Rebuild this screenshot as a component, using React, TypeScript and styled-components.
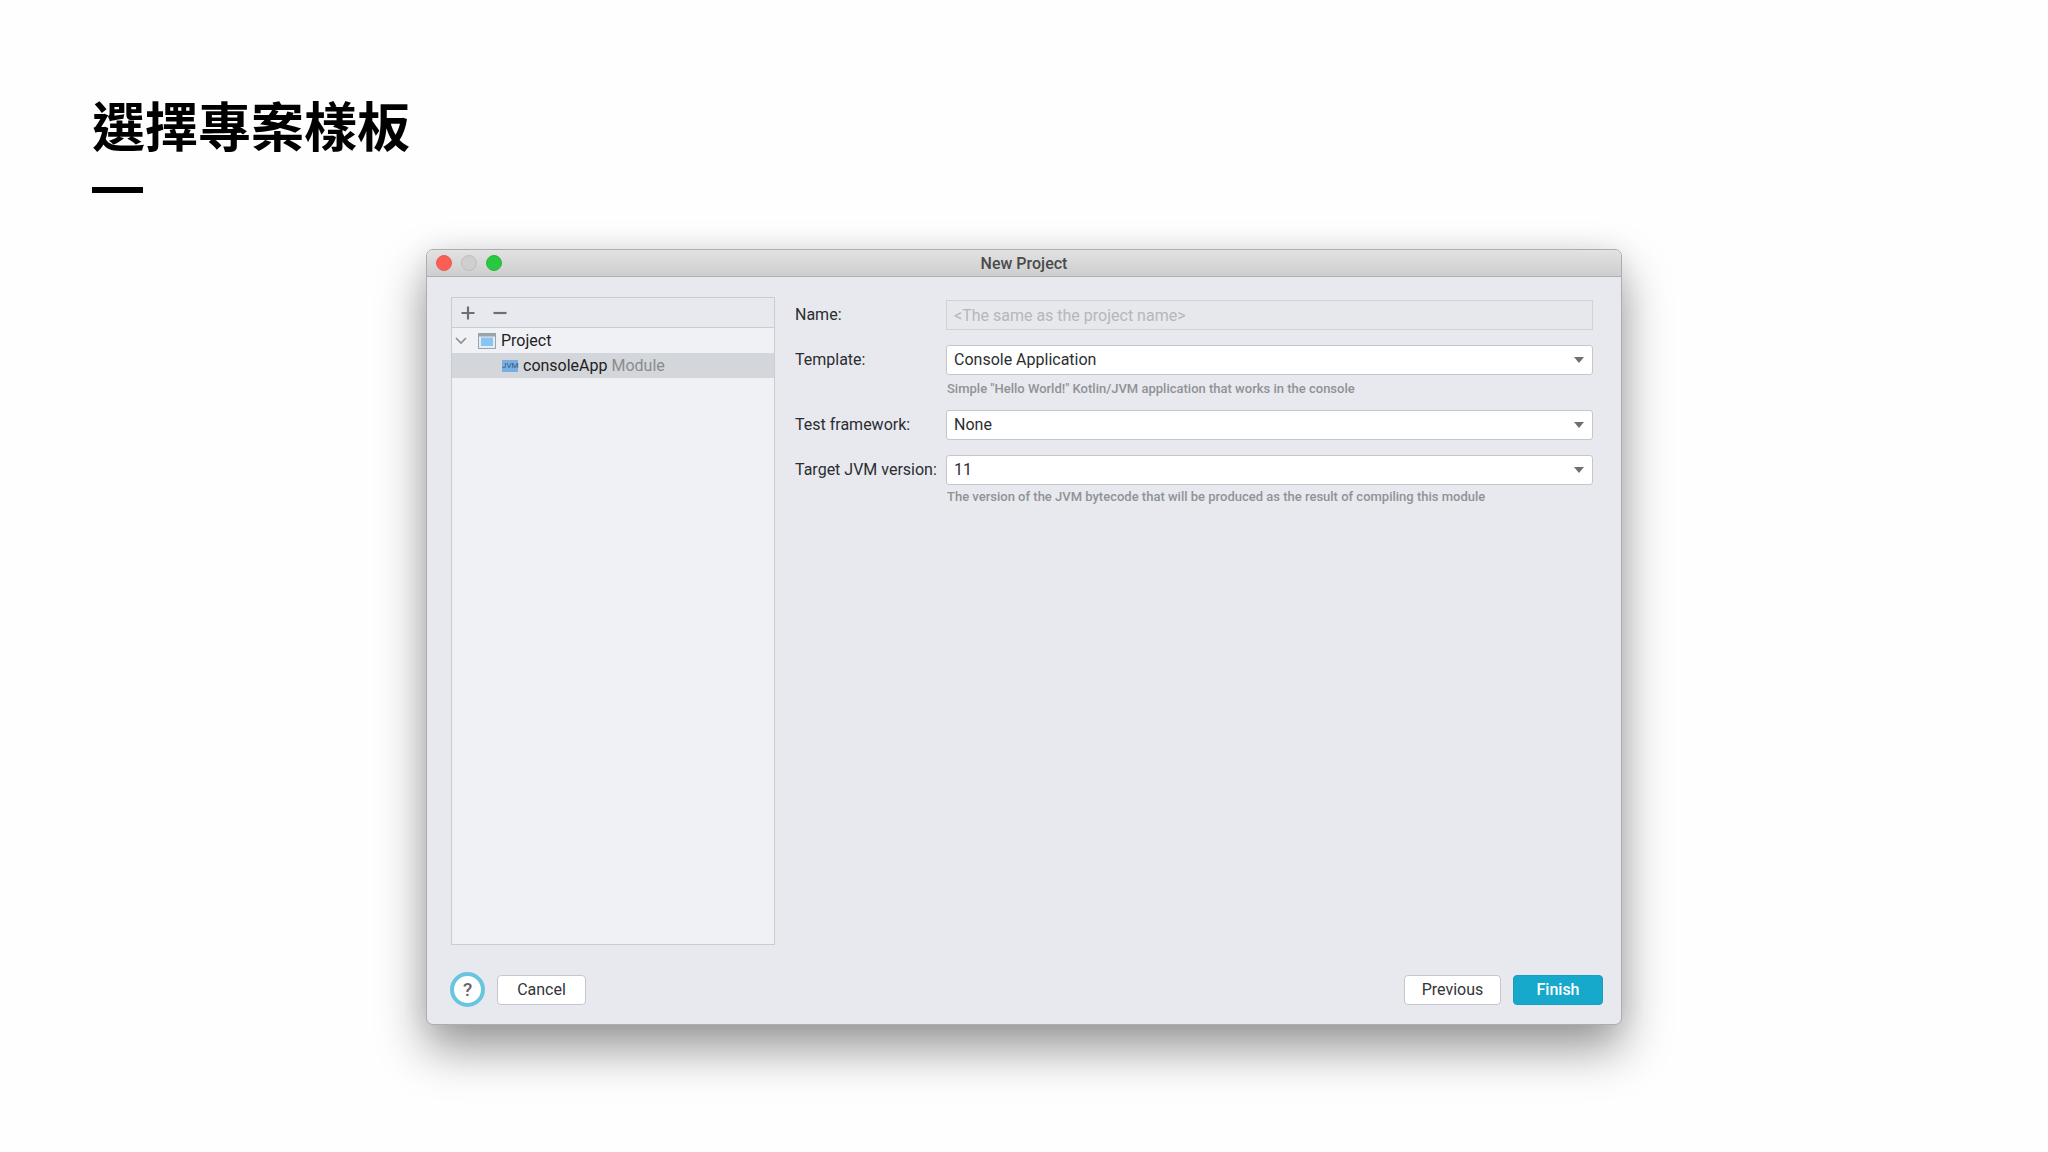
import React from "react";
import styled, { createGlobalStyle } from "styled-components";

const GlobalStyle = createGlobalStyle`
  *, *::before, *::after { box-sizing: border-box; }
  body {
    margin: 0;
    background: #fefefe;
    color: #2b2d30;
    font-family: Roboto, "Liberation Sans", sans-serif;
    font-size: 16px;
  }
`;

const Slide = styled.main`
  display: flex;
  flex-direction: column;
  min-height: 100vh;
  padding: 84px 92px 127px;
`;

const Heading = styled.h1`
  margin: 0;
  color: #000;
  font: 700 53px/80px "Noto Sans CJK TC", sans-serif;

  &::after {
    content: "";
    display: block;
    width: 51px;
    height: 6px;
    margin-top: 23px;
    background: #000;
  }
`;

const Dialog = styled.section`
  display: flex;
  flex: 1;
  flex-direction: column;
  width: 100%;
  max-width: 1196px;
  margin: 56px auto 0;
  border: 1px solid #acadaf;
  border-radius: 7px;
  background: #e7e9ee;
  box-shadow: 0 24px 48px rgba(0, 0, 0, 0.4), 0 0 28px rgba(0, 0, 0, 0.07);
`;

const TitleBar = styled.header`
  display: grid;
  grid-template-columns: 1fr auto 1fr;
  align-items: center;
  height: 27px;
  padding: 0 9px;
  border-bottom: 1px solid #b0b0b0;
  border-radius: 6px 6px 0 0;
  background: linear-gradient(#e2e2e2, #cecece);
`;

const Lights = styled.div`
  display: flex;
  gap: 9px;
`;

const Light = styled.button<{ $fill: string; $ring: string }>`
  width: 16px;
  height: 16px;
  padding: 0;
  border: 1px solid ${(p) => p.$ring};
  border-radius: 50%;
  background: ${(p) => p.$fill};
`;

const WindowTitle = styled.h2`
  margin: 0;
  padding-top: 2px;
  color: #4b4b4b;
  font-size: 16px;
  font-weight: 500;
  line-height: 20px;
`;

const Content = styled.div`
  display: grid;
  flex: 1;
  grid-template-columns: 324px 1fr;
  gap: 20px;
  padding: 20px 28px 0 24px;
`;

const Panel = styled.aside`
  border: 1px solid #c9ccd1;
  background: #eff1f5;
`;

const Toolbar = styled.div`
  display: flex;
  gap: 16px;
  align-items: center;
  height: 30px;
  padding: 0 8px;
  border-bottom: 1px solid #c9ccd1;
  background: #e7e9ee;
`;

const ToolButton = styled.button`
  display: grid;
  width: 16px;
  height: 16px;
  padding: 0;
  border: 0;
  background: none;
  place-items: center;
`;

const Tree = styled.ul`
  margin: 0;
  padding: 0;
  list-style: none;
`;

const TreeRow = styled.li<{ $depth: number; $selected?: boolean }>`
  display: flex;
  gap: 5px;
  align-items: center;
  height: 25px;
  padding-left: ${(p) => (p.$depth ? 50 : 3)}px;
  background: ${(p) => (p.$selected ? "#d3d6da" : "transparent")};
  color: #1f2124;

  small { color: #8a8c8f; font-size: inherit; }
  svg + svg { margin-left: 6px; }
`;

const JvmBadge = styled.span`
  width: 16px;
  height: 12px;
  background: #78aee2;
  color: #36587c;
  font-size: 8px;
  line-height: 12px;
  text-align: center;
`;

const Form = styled.form`
  display: grid;
  grid-template-columns: 151px 1fr;
  grid-auto-rows: min-content;
  padding-top: 3px;
`;

const Label = styled.label`
  line-height: 30px;
  white-space: nowrap;
`;

const TextField = styled.input`
  width: 100%;
  height: 30px;
  margin-bottom: 15px;
  padding: 0 7px;
  border: 1px solid #cfd2d7;
  background: #e6e8ec;
  font: inherit;

  &::placeholder { color: #b5b7bb; opacity: 1; }
`;

const SelectBox = styled.div`
  display: grid;
  align-items: center;

  > * { grid-area: 1 / 1; }
  svg { justify-self: end; margin-right: 9px; pointer-events: none; }
`;

const Select = styled.select`
  width: 100%;
  height: 30px;
  padding: 0 7px 1px;
  border: 1px solid #c4c6cc;
  border-radius: 3px;
  appearance: none;
  background: #fff;
  color: inherit;
  font: inherit;
`;

const Hint = styled.p<{ $top: number }>`
  grid-column: 2;
  height: ${(p) => 20 + p.$top}px;
  margin: 0;
  padding: ${(p) => p.$top}px 1px 0;
  color: #909297;
  font: 500 13px/20px Roboto, sans-serif;
`;

const Gap = styled.div<{ $size: number }>`
  grid-column: 1 / -1;
  height: ${(p) => p.$size}px;
`;

const Footer = styled.footer`
  display: flex;
  gap: 12px;
  align-items: center;
  height: 79px;
  padding: 10px 18px 0 23px;
`;

const Spacer = styled.span`
  flex: 1;
`;

const Button = styled.button<{ $primary?: boolean; $width: number }>`
  width: ${(p) => p.$width}px;
  height: 30px;
  padding: 1px 0 0;
  border: 1px solid ${(p) => (p.$primary ? "#1b9dbd" : "#c6c7ce")};
  border-radius: 4px;
  background: ${(p) => (p.$primary ? "#17a9cb" : "#fff")};
  color: ${(p) => (p.$primary ? "#fff" : "#333538")};
  font: ${(p) => (p.$primary ? 500 : 400)} 16px/20px Roboto, sans-serif;
`;

const HelpButton = styled.button`
  width: 35px;
  height: 35px;
  padding: 0;
  border: 4px solid #68c5e0;
  border-radius: 50%;
  background: #fff;
  color: #646469;
  font: 500 19px/24px Roboto, sans-serif;
`;

function Chevron() {
  return (
    <svg width="12" height="12" viewBox="0 0 12 12" fill="none" stroke="#8b8d91" strokeWidth="1.6" aria-hidden="true">
      <path d="M1 3 6 8 11 3" />
    </svg>
  );
}

function ProjectIcon() {
  return (
    <svg width="18" height="16" viewBox="0 0 18 16" aria-hidden="true">
      <path fill="#9ba3ab" d="M0 0h18v16H0z" />
      <path fill="#e3edf6" d="M1 3.5h16V15H1z" />
      <path fill="#8ac4f3" d="M3 4.5h12V13H3z" />
    </svg>
  );
}

interface DropdownProps {
  id: string;
  label: string;
  options: string[];
}

function Dropdown({ id, label, options }: DropdownProps) {
  return (
    <>
      <Label htmlFor={id}>{label}</Label>
      <SelectBox>
        <Select id={id}>
          {options.map((option) => <option key={option}>{option}</option>)}
        </Select>
        <svg width="10" height="6" viewBox="0 0 10 6" aria-hidden="true">
          <path d="M0 0h10L5 6z" fill="#6e6f72" />
        </svg>
      </SelectBox>
    </>
  );
}

export default function App() {
  return (
    <Slide lang="zh-Hant">
      <GlobalStyle />
      <Heading>選擇專案樣板</Heading>
      <Dialog lang="en" role="dialog" aria-labelledby="window-title">
        <TitleBar>
          <Lights>
            <Light type="button" aria-label="Close" $fill="#fb5e55" $ring="#e65c54" />
            <Light type="button" aria-label="Minimize" $fill="#cfcfcf" $ring="#bfbfbf" />
            <Light type="button" aria-label="Zoom" $fill="#28c841" $ring="#28b63c" />
          </Lights>
          <WindowTitle id="window-title">New Project</WindowTitle>
        </TitleBar>
        <Content>
          <Panel>
            <Toolbar>
              <ToolButton type="button" aria-label="Add">
                <svg width="14" height="14" viewBox="0 0 14 14" stroke="#6c6e72" strokeWidth="2.2">
                  <path d="M7 .5v13M.5 7h13" />
                </svg>
              </ToolButton>
              <ToolButton type="button" aria-label="Remove">
                <svg width="14" height="14" viewBox="0 0 14 14" stroke="#6c6e72" strokeWidth="2.2">
                  <path d="M.5 7h13" />
                </svg>
              </ToolButton>
            </Toolbar>
            <Tree>
              <TreeRow $depth={0}>
                <Chevron />
                <ProjectIcon />
                <span>Project</span>
              </TreeRow>
              <TreeRow $depth={1} $selected>
                <JvmBadge>JVM</JvmBadge>
                <span>consoleApp <small>Module</small></span>
              </TreeRow>
            </Tree>
          </Panel>
          <Form>
            <Label htmlFor="name">Name:</Label>
            <TextField id="name" disabled placeholder="<The same as the project name>" />
            <Dropdown id="template" label="Template:" options={["Console Application"]} />
            <Hint $top={4}>Simple "Hello World!" Kotlin/JVM application that works in the console</Hint>
            <Gap $size={11} />
            <Dropdown id="framework" label="Test framework:" options={["None"]} />
            <Gap $size={15} />
            <Dropdown id="jvm" label="Target JVM version:" options={["11"]} />
            <Hint $top={2}>The version of the JVM bytecode that will be produced as the result of compiling this module</Hint>
          </Form>
        </Content>
        <Footer>
          <HelpButton type="button" aria-label="Help">?</HelpButton>
          <Button type="button" $width={89}>Cancel</Button>
          <Spacer />
          <Button type="button" $width={97}>Previous</Button>
          <Button type="button" $width={90} $primary>Finish</Button>
        </Footer>
      </Dialog>
    </Slide>
  );
}
